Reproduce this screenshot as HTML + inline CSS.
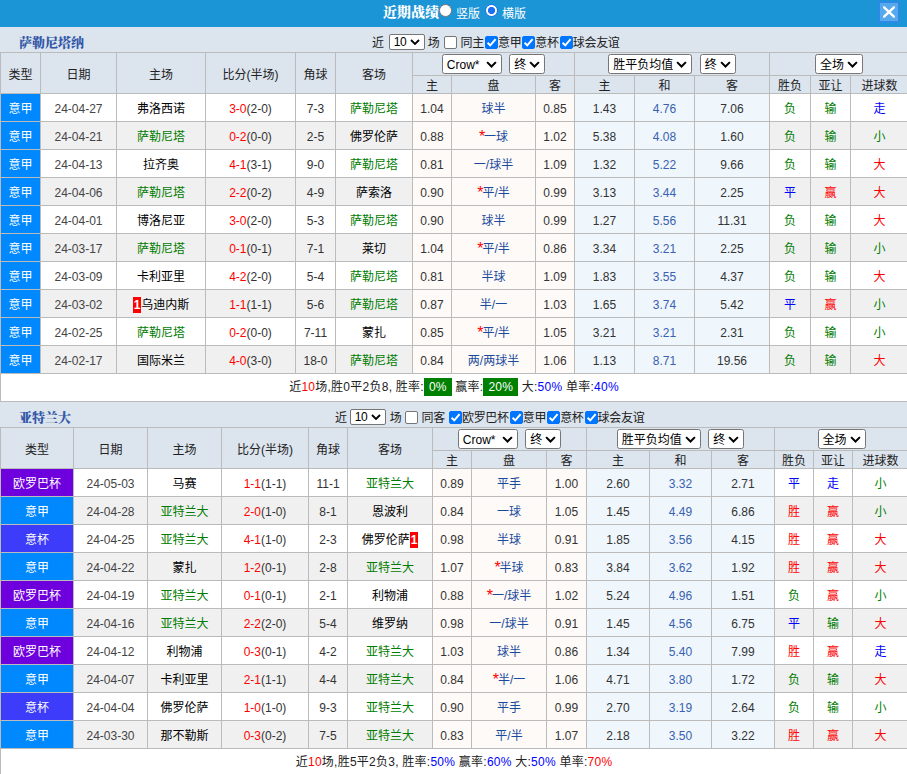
<!DOCTYPE html>
<html lang="zh-CN"><head><meta charset="utf-8"><title>近期战绩</title>
<style>
*{box-sizing:border-box}
html,body{margin:0;padding:0}
body{width:907px;height:774px;overflow:hidden;background:#fff;font-family:"Liberation Sans","Noto Sans CJK SC",sans-serif;font-size:12px;color:#333;position:relative}
#bar{position:relative;height:27px;background:#1b95d6;color:#fff;overflow:hidden}
#bar .ttl{position:absolute;left:383px;top:1px;font:900 14px/24px "Liberation Serif","Noto Serif CJK SC",serif;letter-spacing:0}
#bar .rd{position:absolute;top:4px;width:13px;height:13px;border-radius:50%;background:#fff;border:1px solid #777}
#bar .rd.on{left:439px}
#bar .rd.r2{left:485px;border:1px solid #1a73e8;background:radial-gradient(circle at center,#1a6ff5 0,#1a6ff5 3.2px,#fff 4px)}
#bar .rl{position:absolute;top:5px;font-size:12px;line-height:18px}
#bar .rl:nth-of-type(3){left:456px}
#bar .rl:nth-of-type(5){left:502px}
#bar .close{position:absolute;left:878px;top:1px;width:22px;height:22px;background:#56a9ed;border:2px solid #2b8ae5}
#bar .close svg{width:18px;height:18px;display:block}
#bar .close path{stroke:#fff;stroke-width:2.3;fill:none;stroke-linecap:round}
.team{position:relative;height:25px;background:#dce4ee;overflow:hidden}
.team .tn{position:absolute;left:19px;top:5px;font:900 13px/22px "Liberation Serif","Noto Serif CJK SC",serif;color:#3358a8}
.team .flt{letter-spacing:-0.3px;position:absolute;top:6px;line-height:20px;font-size:12px;color:#222;white-space:nowrap}
.sel{margin:0 2px;display:inline-block;position:relative;height:20px;border:1px solid #767676;border-radius:2.5px;background:#fff;vertical-align:middle;text-align:left;font-size:12px;line-height:18px;color:#000;padding-left:4px;padding-top:1px;white-space:nowrap}
.sel.s10{top:-2px;margin:0 0 0 2px;height:16px;line-height:14px;padding-top:0;padding-left:4px;font-size:12px;border-radius:2px}
.sel .arr{position:absolute;right:4px;top:6px;width:11px;height:6.6px}
.sel.s10 .arr{top:4px;right:4px;width:10px;height:6px}
.sel .arr path{stroke:#000;stroke-width:1.8;fill:none}
.cb{margin:0 1px 0 1px;display:inline-block;width:13px;height:13px;border:1px solid #767676;border-radius:2px;background:#fff;vertical-align:-2px}
.cb.on{background:#0075ff;border-color:#0075ff;margin:0 0 0 1px}
.cb svg{display:block;width:13px;height:13px;margin:-1px}
.cb path{stroke:#fff;stroke-width:2;fill:none}
table.t{border-collapse:separate;border-spacing:0;table-layout:fixed;width:908px;border-left:1px solid #bbb;border-top:1px solid #bbb}
.t th,.t td{border-right:1px solid #bbb;border-bottom:1px solid #bbb;padding:0;text-align:center;font-weight:normal;white-space:nowrap;overflow:hidden}
.t th{background:#dce4ee;color:#222}
.t tr.h1{height:23px}
.t tr.h2{height:18px}
.t tr.h2 th{line-height:14px;padding-top:3px}
.t tr.odd,.t tr.even{height:28px}
.t tr.even td{background:#f0f0f0}
.t td{color:#333}
.t td.lg{color:#fff}
.t td.l1{background:#0088ff !important}
.t td.l2{background:#6d00dc !important}
.t td.l3{background:#3c3cfa !important}
.t td.c1{background:#fefaf7 !important}
.t td.c2{background:#eff7fc !important}
.t td.pan{color:#1a4a9c}
.t td.he{color:#3a60b0}
.t td.dt{color:#444}
.t td.n{padding-top:2px}
.t td.tm{color:#000}
.r{color:#f00 !important}
.g{color:#007c00 !important}
.b{color:#00f !important}
.star{color:#f00;font-size:16px;line-height:0;position:relative;top:1px;margin-right:-1px}
.rc{background:#f00;color:#fff;font-weight:bold;padding:1px 1px}
.sum{letter-spacing:0.25px;height:28px;border-left:1px solid #bbb;border-bottom:1px solid #bbb;text-align:center;line-height:27px;color:#222;font-size:12px}
.gb{display:inline-block;height:18px;line-height:18px;background:#008000;color:#fff;padding:0 5px;font-weight:normal;margin-left:0;vertical-align:0}

</style></head><body>
<div id="bar"><span class="ttl">近期战绩</span><span class="rd on"></span><span class="rl">竖版</span><span class="rd r2"></span><span class="rl">横版</span>
<span class="close"><svg viewBox="0 0 18 18"><path d="M4.1 4.3 L13.9 13.7 M13.9 4.3 L4.1 13.7"/></svg></span></div>
<div class="team"><span class="tn">萨勒尼塔纳</span>
<span class="flt" style="left:372px">近 <span class="sel s10" style="margin:0 0px 0 2px;width:36px"><span class="st">10</span><svg class="arr" viewBox="0 0 10 6"><path d="M1 1 L5 5 L9 1"/></svg></span> 场 <span class="cb" style="margin:0 1px 0 1px"></span> 同主<span class="cb on"><svg viewBox="0 0 13 13"><path d="M2.6 6.7 L5.3 9.4 L10.6 3.2" /></svg></span>意甲<span class="cb on"><svg viewBox="0 0 13 13"><path d="M2.6 6.7 L5.3 9.4 L10.6 3.2" /></svg></span>意杯<span class="cb on"><svg viewBox="0 0 13 13"><path d="M2.6 6.7 L5.3 9.4 L10.6 3.2" /></svg></span>球会友谊</span></div>
<table class="t"><colgroup>
<col style="width:40px">
<col style="width:76px">
<col style="width:89px">
<col style="width:90px">
<col style="width:40px">
<col style="width:77px">
<col style="width:39px">
<col style="width:84px">
<col style="width:39px">
<col style="width:60px">
<col style="width:60px">
<col style="width:75px">
<col style="width:41px">
<col style="width:40px">
<col style="width:58px">
</colgroup>
<tr class="h1"><th rowspan="2">类型</th><th rowspan="2">日期</th><th rowspan="2">主场</th><th rowspan="2">比分(半场)</th><th rowspan="2">角球</th><th rowspan="2">客场</th>
<th colspan="3"><span class="sel " style="width:60px"><span class="st">Crow*</span><svg class="arr" viewBox="0 0 10 6"><path d="M1 1 L5 5 L9 1"/></svg></span> <span class="sel " style="width:36px"><span class="st">终</span><svg class="arr" viewBox="0 0 10 6"><path d="M1 1 L5 5 L9 1"/></svg></span></th><th colspan="3"><span class="sel " style="width:84px"><span class="st">胜平负均值</span><svg class="arr" viewBox="0 0 10 6"><path d="M1 1 L5 5 L9 1"/></svg></span> <span class="sel " style="width:36px"><span class="st">终</span><svg class="arr" viewBox="0 0 10 6"><path d="M1 1 L5 5 L9 1"/></svg></span></th><th colspan="3"><span class="sel " style="width:48px"><span class="st">全场</span><svg class="arr" viewBox="0 0 10 6"><path d="M1 1 L5 5 L9 1"/></svg></span></th></tr>
<tr class="h2"><th>主</th><th>盘</th><th>客</th><th>主</th><th>和</th><th>客</th><th>胜负</th><th>亚让</th><th>进球数</th></tr>
<tr class="odd">
<td class="lg l1">意甲</td><td class="dt n">24-04-27</td><td class="tm">弗洛西诺</td><td class="n"><span class="r">3-0</span>(2-0)</td><td class="n">7-3</td><td class="tm g">萨勒尼塔</td>
<td class="c1 n">1.04</td><td class="c1 pan">球半</td><td class="c1 n">0.85</td>
<td class="c2 n">1.43</td><td class="c2 he n">4.76</td><td class="c2 n">7.06</td>
<td class="c3 g">负</td><td class="c3 g">输</td><td class="c3 b">走</td></tr>
<tr class="even">
<td class="lg l1">意甲</td><td class="dt n">24-04-21</td><td class="tm g">萨勒尼塔</td><td class="n"><span class="r">0-2</span>(0-0)</td><td class="n">2-5</td><td class="tm">佛罗伦萨</td>
<td class="c1 n">0.88</td><td class="c1 pan"><span class="star">*</span>一球</td><td class="c1 n">1.02</td>
<td class="c2 n">5.38</td><td class="c2 he n">4.08</td><td class="c2 n">1.60</td>
<td class="c3 g">负</td><td class="c3 g">输</td><td class="c3 g">小</td></tr>
<tr class="odd">
<td class="lg l1">意甲</td><td class="dt n">24-04-13</td><td class="tm">拉齐奥</td><td class="n"><span class="r">4-1</span>(3-1)</td><td class="n">9-0</td><td class="tm g">萨勒尼塔</td>
<td class="c1 n">0.81</td><td class="c1 pan">一/球半</td><td class="c1 n">1.09</td>
<td class="c2 n">1.32</td><td class="c2 he n">5.22</td><td class="c2 n">9.66</td>
<td class="c3 g">负</td><td class="c3 g">输</td><td class="c3 r">大</td></tr>
<tr class="even">
<td class="lg l1">意甲</td><td class="dt n">24-04-06</td><td class="tm g">萨勒尼塔</td><td class="n"><span class="r">2-2</span>(0-2)</td><td class="n">4-9</td><td class="tm">萨索洛</td>
<td class="c1 n">0.90</td><td class="c1 pan"><span class="star">*</span>平/半</td><td class="c1 n">0.99</td>
<td class="c2 n">3.13</td><td class="c2 he n">3.44</td><td class="c2 n">2.25</td>
<td class="c3 b">平</td><td class="c3 r">赢</td><td class="c3 r">大</td></tr>
<tr class="odd">
<td class="lg l1">意甲</td><td class="dt n">24-04-01</td><td class="tm">博洛尼亚</td><td class="n"><span class="r">3-0</span>(2-0)</td><td class="n">5-3</td><td class="tm g">萨勒尼塔</td>
<td class="c1 n">0.90</td><td class="c1 pan">球半</td><td class="c1 n">0.99</td>
<td class="c2 n">1.27</td><td class="c2 he n">5.56</td><td class="c2 n">11.31</td>
<td class="c3 g">负</td><td class="c3 g">输</td><td class="c3 r">大</td></tr>
<tr class="even">
<td class="lg l1">意甲</td><td class="dt n">24-03-17</td><td class="tm g">萨勒尼塔</td><td class="n"><span class="r">0-1</span>(0-1)</td><td class="n">7-1</td><td class="tm">莱切</td>
<td class="c1 n">1.04</td><td class="c1 pan"><span class="star">*</span>平/半</td><td class="c1 n">0.86</td>
<td class="c2 n">3.34</td><td class="c2 he n">3.21</td><td class="c2 n">2.25</td>
<td class="c3 g">负</td><td class="c3 g">输</td><td class="c3 g">小</td></tr>
<tr class="odd">
<td class="lg l1">意甲</td><td class="dt n">24-03-09</td><td class="tm">卡利亚里</td><td class="n"><span class="r">4-2</span>(2-0)</td><td class="n">5-4</td><td class="tm g">萨勒尼塔</td>
<td class="c1 n">0.81</td><td class="c1 pan">半球</td><td class="c1 n">1.09</td>
<td class="c2 n">1.83</td><td class="c2 he n">3.55</td><td class="c2 n">4.37</td>
<td class="c3 g">负</td><td class="c3 g">输</td><td class="c3 r">大</td></tr>
<tr class="even">
<td class="lg l1">意甲</td><td class="dt n">24-03-02</td><td class="tm"><span class="rc">1</span>乌迪内斯</td><td class="n"><span class="r">1-1</span>(1-1)</td><td class="n">5-6</td><td class="tm g">萨勒尼塔</td>
<td class="c1 n">0.87</td><td class="c1 pan">半/一</td><td class="c1 n">1.03</td>
<td class="c2 n">1.65</td><td class="c2 he n">3.74</td><td class="c2 n">5.42</td>
<td class="c3 b">平</td><td class="c3 r">赢</td><td class="c3 g">小</td></tr>
<tr class="odd">
<td class="lg l1">意甲</td><td class="dt n">24-02-25</td><td class="tm g">萨勒尼塔</td><td class="n"><span class="r">0-2</span>(0-0)</td><td class="n">7-11</td><td class="tm">蒙扎</td>
<td class="c1 n">0.85</td><td class="c1 pan"><span class="star">*</span>平/半</td><td class="c1 n">1.05</td>
<td class="c2 n">3.21</td><td class="c2 he n">3.21</td><td class="c2 n">2.31</td>
<td class="c3 g">负</td><td class="c3 g">输</td><td class="c3 g">小</td></tr>
<tr class="even">
<td class="lg l1">意甲</td><td class="dt n">24-02-17</td><td class="tm">国际米兰</td><td class="n"><span class="r">4-0</span>(3-0)</td><td class="n">18-0</td><td class="tm g">萨勒尼塔</td>
<td class="c1 n">0.84</td><td class="c1 pan">两/两球半</td><td class="c1 n">1.06</td>
<td class="c2 n">1.13</td><td class="c2 he n">8.71</td><td class="c2 n">19.56</td>
<td class="c3 g">负</td><td class="c3 g">输</td><td class="c3 r">大</td></tr>
</table>
<div class="sum">近<span class="r">10</span>场,胜0平2负8, 胜率:<b class="gb">0%</b> 赢率:<b class="gb">20%</b> 大:<span class="b">50%</span> 单率:<span class="b">40%</span></div>
<div class="team"><span class="tn">亚特兰大</span>
<span class="flt" style="left:335px">近 <span class="sel s10" style="margin:0 1px 0 0px;width:36px"><span class="st">10</span><svg class="arr" viewBox="0 0 10 6"><path d="M1 1 L5 5 L9 1"/></svg></span> 场 <span class="cb" style="margin:0 1px 0 0px"></span> 同客<span class="cb on" style="margin-left:4px"><svg viewBox="0 0 13 13"><path d="M2.6 6.7 L5.3 9.4 L10.6 3.2" /></svg></span>欧罗巴杯<span class="cb on"><svg viewBox="0 0 13 13"><path d="M2.6 6.7 L5.3 9.4 L10.6 3.2" /></svg></span>意甲<span class="cb on"><svg viewBox="0 0 13 13"><path d="M2.6 6.7 L5.3 9.4 L10.6 3.2" /></svg></span>意杯<span class="cb on"><svg viewBox="0 0 13 13"><path d="M2.6 6.7 L5.3 9.4 L10.6 3.2" /></svg></span>球会友谊</span></div>
<table class="t"><colgroup>
<col style="width:73px">
<col style="width:74px">
<col style="width:74px">
<col style="width:87px">
<col style="width:39px">
<col style="width:85px">
<col style="width:39px">
<col style="width:75px">
<col style="width:40px">
<col style="width:63px">
<col style="width:62px">
<col style="width:63px">
<col style="width:39px">
<col style="width:39px">
<col style="width:56px">
</colgroup>
<tr class="h1"><th rowspan="2">类型</th><th rowspan="2">日期</th><th rowspan="2">主场</th><th rowspan="2">比分(半场)</th><th rowspan="2">角球</th><th rowspan="2">客场</th>
<th colspan="3"><span class="sel " style="width:60px"><span class="st">Crow*</span><svg class="arr" viewBox="0 0 10 6"><path d="M1 1 L5 5 L9 1"/></svg></span> <span class="sel " style="width:36px"><span class="st">终</span><svg class="arr" viewBox="0 0 10 6"><path d="M1 1 L5 5 L9 1"/></svg></span></th><th colspan="3"><span class="sel " style="width:84px"><span class="st">胜平负均值</span><svg class="arr" viewBox="0 0 10 6"><path d="M1 1 L5 5 L9 1"/></svg></span> <span class="sel " style="width:36px"><span class="st">终</span><svg class="arr" viewBox="0 0 10 6"><path d="M1 1 L5 5 L9 1"/></svg></span></th><th colspan="3"><span class="sel " style="width:48px"><span class="st">全场</span><svg class="arr" viewBox="0 0 10 6"><path d="M1 1 L5 5 L9 1"/></svg></span></th></tr>
<tr class="h2"><th>主</th><th>盘</th><th>客</th><th>主</th><th>和</th><th>客</th><th>胜负</th><th>亚让</th><th>进球数</th></tr>
<tr class="odd">
<td class="lg l2">欧罗巴杯</td><td class="dt n">24-05-03</td><td class="tm">马赛</td><td class="n"><span class="r">1-1</span>(1-1)</td><td class="n">11-1</td><td class="tm g">亚特兰大</td>
<td class="c1 n">0.89</td><td class="c1 pan">平手</td><td class="c1 n">1.00</td>
<td class="c2 n">2.60</td><td class="c2 he n">3.32</td><td class="c2 n">2.71</td>
<td class="c3 b">平</td><td class="c3 b">走</td><td class="c3 g">小</td></tr>
<tr class="even">
<td class="lg l1">意甲</td><td class="dt n">24-04-28</td><td class="tm g">亚特兰大</td><td class="n"><span class="r">2-0</span>(1-0)</td><td class="n">8-1</td><td class="tm">恩波利</td>
<td class="c1 n">0.84</td><td class="c1 pan">一球</td><td class="c1 n">1.05</td>
<td class="c2 n">1.45</td><td class="c2 he n">4.49</td><td class="c2 n">6.86</td>
<td class="c3 r">胜</td><td class="c3 r">赢</td><td class="c3 g">小</td></tr>
<tr class="odd">
<td class="lg l3">意杯</td><td class="dt n">24-04-25</td><td class="tm g">亚特兰大</td><td class="n"><span class="r">4-1</span>(1-0)</td><td class="n">2-3</td><td class="tm">佛罗伦萨<span class="rc">1</span></td>
<td class="c1 n">0.98</td><td class="c1 pan">半球</td><td class="c1 n">0.91</td>
<td class="c2 n">1.85</td><td class="c2 he n">3.56</td><td class="c2 n">4.15</td>
<td class="c3 r">胜</td><td class="c3 r">赢</td><td class="c3 r">大</td></tr>
<tr class="even">
<td class="lg l1">意甲</td><td class="dt n">24-04-22</td><td class="tm">蒙扎</td><td class="n"><span class="r">1-2</span>(0-1)</td><td class="n">2-8</td><td class="tm g">亚特兰大</td>
<td class="c1 n">1.07</td><td class="c1 pan"><span class="star">*</span>半球</td><td class="c1 n">0.83</td>
<td class="c2 n">3.84</td><td class="c2 he n">3.62</td><td class="c2 n">1.92</td>
<td class="c3 r">胜</td><td class="c3 r">赢</td><td class="c3 r">大</td></tr>
<tr class="odd">
<td class="lg l2">欧罗巴杯</td><td class="dt n">24-04-19</td><td class="tm g">亚特兰大</td><td class="n"><span class="r">0-1</span>(0-1)</td><td class="n">2-1</td><td class="tm">利物浦</td>
<td class="c1 n">0.88</td><td class="c1 pan"><span class="star">*</span>一/球半</td><td class="c1 n">1.02</td>
<td class="c2 n">5.24</td><td class="c2 he n">4.96</td><td class="c2 n">1.51</td>
<td class="c3 g">负</td><td class="c3 r">赢</td><td class="c3 g">小</td></tr>
<tr class="even">
<td class="lg l1">意甲</td><td class="dt n">24-04-16</td><td class="tm g">亚特兰大</td><td class="n"><span class="r">2-2</span>(2-0)</td><td class="n">5-4</td><td class="tm">维罗纳</td>
<td class="c1 n">0.98</td><td class="c1 pan">一/球半</td><td class="c1 n">0.91</td>
<td class="c2 n">1.45</td><td class="c2 he n">4.56</td><td class="c2 n">6.75</td>
<td class="c3 b">平</td><td class="c3 g">输</td><td class="c3 r">大</td></tr>
<tr class="odd">
<td class="lg l2">欧罗巴杯</td><td class="dt n">24-04-12</td><td class="tm">利物浦</td><td class="n"><span class="r">0-3</span>(0-1)</td><td class="n">4-2</td><td class="tm g">亚特兰大</td>
<td class="c1 n">1.03</td><td class="c1 pan">球半</td><td class="c1 n">0.86</td>
<td class="c2 n">1.34</td><td class="c2 he n">5.40</td><td class="c2 n">7.99</td>
<td class="c3 r">胜</td><td class="c3 r">赢</td><td class="c3 b">走</td></tr>
<tr class="even">
<td class="lg l1">意甲</td><td class="dt n">24-04-07</td><td class="tm">卡利亚里</td><td class="n"><span class="r">2-1</span>(1-1)</td><td class="n">4-4</td><td class="tm g">亚特兰大</td>
<td class="c1 n">0.84</td><td class="c1 pan"><span class="star">*</span>半/一</td><td class="c1 n">1.06</td>
<td class="c2 n">4.71</td><td class="c2 he n">3.80</td><td class="c2 n">1.72</td>
<td class="c3 g">负</td><td class="c3 g">输</td><td class="c3 r">大</td></tr>
<tr class="odd">
<td class="lg l3">意杯</td><td class="dt n">24-04-04</td><td class="tm">佛罗伦萨</td><td class="n"><span class="r">1-0</span>(1-0)</td><td class="n">9-3</td><td class="tm g">亚特兰大</td>
<td class="c1 n">0.90</td><td class="c1 pan">平手</td><td class="c1 n">0.99</td>
<td class="c2 n">2.70</td><td class="c2 he n">3.19</td><td class="c2 n">2.64</td>
<td class="c3 g">负</td><td class="c3 g">输</td><td class="c3 g">小</td></tr>
<tr class="even">
<td class="lg l1">意甲</td><td class="dt n">24-03-30</td><td class="tm">那不勒斯</td><td class="n"><span class="r">0-3</span>(0-2)</td><td class="n">7-5</td><td class="tm g">亚特兰大</td>
<td class="c1 n">0.83</td><td class="c1 pan">平/半</td><td class="c1 n">1.07</td>
<td class="c2 n">2.18</td><td class="c2 he n">3.50</td><td class="c2 n">3.22</td>
<td class="c3 r">胜</td><td class="c3 r">赢</td><td class="c3 r">大</td></tr>
</table>
<div class="sum">近<span class="r">10</span>场,胜5平2负3, 胜率:<span class="b">50%</span> 赢率:<span class="b">60%</span> 大:<span class="b">50%</span> 单率:<span class="r">70%</span></div>
</body></html>
